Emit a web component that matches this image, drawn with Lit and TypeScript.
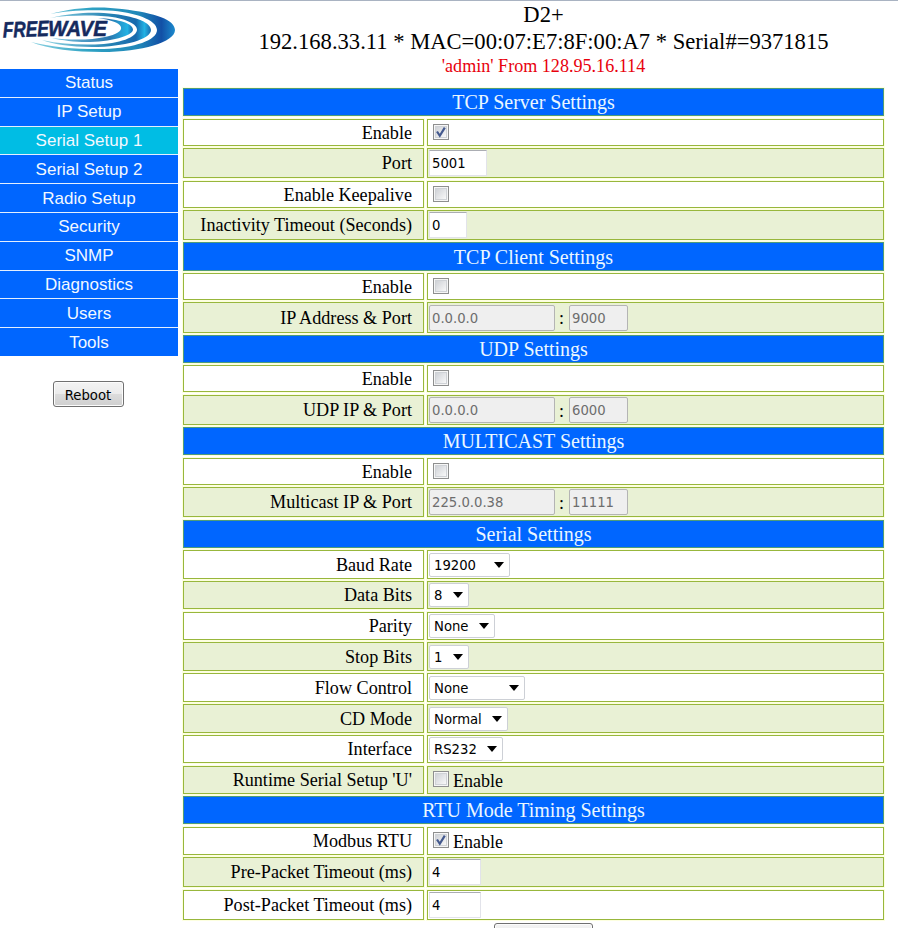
import { LitElement, html, css, nothing } from "lit";
import { customElement } from "lit/decorators.js";

type Field =
  | { kind: "check"; on?: boolean; text?: string }
  | { kind: "text"; value: string; w: number }
  | { kind: "pair"; ip: string; port: string }
  | { kind: "select"; value: string; w: number };

// h is the row's height, gap the space under it
interface Row { h: number; gap: number; title?: string; label?: string; alt?: boolean; field?: Field }

const ROWS: Row[] = [
  { h: 28, gap: 3, title: "TCP Server Settings" },
  { h: 27, gap: 2, label: "Enable", field: { kind: "check", on: true } },
  { h: 30, gap: 3, label: "Port", alt: true, field: { kind: "text", value: "5001", w: 58 } },
  { h: 27, gap: 2, label: "Enable Keepalive", field: { kind: "check" } },
  { h: 30, gap: 2, label: "Inactivity Timeout (Seconds)", alt: true, field: { kind: "text", value: "0", w: 38 } },
  { h: 29, gap: 2, title: "TCP Client Settings" },
  { h: 27, gap: 2, label: "Enable", field: { kind: "check" } },
  { h: 31, gap: 2, label: "IP Address & Port", alt: true, field: { kind: "pair", ip: "0.0.0.0", port: "9000" } },
  { h: 28, gap: 2, title: "UDP Settings" },
  { h: 27, gap: 3, label: "Enable", field: { kind: "check" } },
  { h: 30, gap: 2, label: "UDP IP & Port", alt: true, field: { kind: "pair", ip: "0.0.0.0", port: "6000" } },
  { h: 28, gap: 3, title: "MULTICAST Settings" },
  { h: 27, gap: 2, label: "Enable", field: { kind: "check" } },
  { h: 30, gap: 3, label: "Multicast IP & Port", alt: true, field: { kind: "pair", ip: "225.0.0.38", port: "11111" } },
  { h: 28, gap: 2, title: "Serial Settings" },
  { h: 29, gap: 2, label: "Baud Rate", field: { kind: "select", value: "19200", w: 81 } },
  { h: 28, gap: 3, label: "Data Bits", alt: true, field: { kind: "select", value: "8", w: 40 } },
  { h: 28, gap: 2, label: "Parity", field: { kind: "select", value: "None", w: 66 } },
  { h: 29, gap: 2, label: "Stop Bits", alt: true, field: { kind: "select", value: "1", w: 40 } },
  { h: 29, gap: 2, label: "Flow Control", field: { kind: "select", value: "None", w: 96 } },
  { h: 29, gap: 2, label: "CD Mode", alt: true, field: { kind: "select", value: "Normal", w: 79 } },
  { h: 28, gap: 3, label: "Interface", field: { kind: "select", value: "RS232", w: 74 } },
  { h: 28, gap: 2, label: "Runtime Serial Setup 'U'", alt: true, field: { kind: "check", text: "Enable" } },
  { h: 28, gap: 3, title: "RTU Mode Timing Settings" },
  { h: 28, gap: 2, label: "Modbus RTU", field: { kind: "check", on: true, text: "Enable" } },
  { h: 30, gap: 3, label: "Pre-Packet Timeout (ms)", alt: true, field: { kind: "text", value: "4", w: 52 } },
  { h: 30, gap: 3, label: "Post-Packet Timeout (ms)", field: { kind: "text", value: "4", w: 52 } },
];

const MENU = ["Status", "IP Setup", "Serial Setup 1", "Serial Setup 2", "Radio Setup", "Security", "SNMP", "Diagnostics", "Users", "Tools"];

@customElement("app-root")
export class AppRoot extends LitElement {
  static styles = css`
    :host { display: block; box-sizing: border-box; height: 928px; overflow: hidden; background: #fff;
      border-top: 1px solid #a9b3c2; color: #000; font-family: "Liberation Serif", serif; }
    * { box-sizing: border-box; }
    .page { display: flex; align-items: flex-start; }
    .side { width: 178px; margin-right: 5px; display: flex; flex-direction: column; align-items: center; }
    .logo { display: block; width: 178px; height: 55px; margin-bottom: 13px; }
    .mark { font: italic bold 22px "Liberation Sans", sans-serif; fill: #152a5e; stroke: #152a5e; stroke-width: .5px; }
    .menu { width: 178px; height: 287px; display: grid; grid-template-rows: repeat(10, minmax(0, 1fr)); row-gap: 1px; background: #e4efff; }
    .item { background: #06f; color: #f2f8ff; font: 17px/26px "Liberation Sans", sans-serif; display: flex; align-items: center; justify-content: center; padding-top: 1px; }
    .item.on { background: #00bde4; }
    .button, .input, .select { font-family: "DejaVu Sans Condensed", "DejaVu Sans", sans-serif; font-stretch: condensed; font-size: 14.7px; line-height: 22px; }
    .button { border: 1px solid #707070; border-radius: 3px; box-shadow: inset 0 0 0 1px #fcfcfc;
      background: linear-gradient(#f3f3f3, #ebebeb 50%, #dcdcdc 51%, #cfcfcf); line-height: 25px; text-align: center; }
    .reboot { width: 71px; height: 26px; margin: 25px 2px 0 0; }
    .submit { width: 99px; height: 26px; margin-left: 311px; }
    .main { width: 701px; }
    .head { height: 87px; text-align: center; padding: 0 0 0 20px; font-size: 22.6px; line-height: 27px; }
    .user { font-size: 18.1px; line-height: 22px; color: #e8000c; }
    .row { display: grid; grid-template-columns: 241px 457px; column-gap: 3px; }
    .cell { border: 1px solid #98b73c; display: flex; align-items: center; min-width: 0; box-shadow: 0 0 0 1px #fdffe0; }
    .alt { background: #e9f1d5; }
    .title { grid-column: 1 / 3; background: #06f; border-color: #4f9c78; color: #eaf7ff; font-size: 20px; justify-content: center; padding-top: 1px; }
    .label { justify-content: flex-end; padding: 1.5px 11px 0 0; font-size: 18.15px; white-space: nowrap; }
    .value { padding-left: 1px; font-size: 18px; }
    .box { display: block; width: 16px; height: 16px; margin: 0 4px 1px; }
    .box.tight { margin-bottom: 2px; }
    .caption { padding-top: 2px; }
    .input, .select { background: #fff; border: 1px solid #e2e3ea; border-top-color: #abadb3; }
    .input { height: 26px; padding: 1px 2px; white-space: nowrap; }
    .disabled { background: #efefef; border-color: #b4b4b4; border-radius: 2px; color: #6d6d6d; }
    .ip { width: 126px; }
    .port { width: 59px; }
    .colon { width: 14px; padding: 2px 0 0 4px; }
    .select { height: 24px; padding: 0 5px 0 4px; display: flex; align-items: center; justify-content: space-between; border-color: #cdd0d6; border-radius: 2px; }
    .arrow { width: 10px; height: 6px; flex: none; }
  `;

  private field(f: Field) {
    switch (f.kind) {
      case "check":
        return html`<svg class="box ${f.text ? "tight" : ""}" viewBox="0 0 16 16">
            <defs><linearGradient id="g" x1="0" y1="0" x2="1" y2="1"><stop offset="0" stop-color="#cdd0d5" /><stop offset="1" stop-color="#fafafa" /></linearGradient></defs>
            <rect x=".5" y=".5" width="15" height="15" fill="#f6f6f6" stroke="#8e8f8f" />
            <rect x="2.5" y="2.5" width="11" height="11" fill="url(#g)" stroke="#cfd2d6" />
            ${f.on ? html`<svg viewBox="0 0 16 16"><path d="M4 7.5 6.8 11.8 11.8 3.6" fill="none" stroke="#44598e" stroke-width="2.2" /></svg>` : nothing}
          </svg>${f.text ? html`<span class="caption">${f.text}</span>` : nothing}`;
      case "text":
        return html`<div class="input" style="width:${f.w}px">${f.value}</div>`;
      case "pair":
        return html`<div class="input disabled ip">${f.ip}</div><span class="colon">:</span><div class="input disabled port">${f.port}</div>`;
      case "select":
        return html`<div class="select" style="width:${f.w}px">${f.value}<svg class="arrow" viewBox="0 0 10 6"><path d="M0 0h10L5 6z" /></svg></div>`;
    }
  }

  render() {
    return html`<div class="page">
      <div class="side">
        <svg class="logo" viewBox="0 1 178 55">
          <defs>
            <linearGradient id="w" gradientUnits="userSpaceOnUse" x1="30" y1="0" x2="176" y2="0"><stop offset="0" stop-color="#8fd3e2" /><stop offset=".4" stop-color="#2fa3c4" /><stop offset=".75" stop-color="#1f86b8" /><stop offset=".9" stop-color="#1250a6" /><stop offset="1" stop-color="#1c8fd0" /></linearGradient>
            <linearGradient id="m" gradientUnits="userSpaceOnUse" x1="45" y1="0" x2="152" y2="0"><stop offset="0" stop-color="#8fd3e2" /><stop offset=".6" stop-color="#2683b4" /><stop offset=".85" stop-color="#1768ac" /><stop offset=".93" stop-color="#22b2e4" /><stop offset="1" stop-color="#1a5fa4" /></linearGradient>
            <linearGradient id="n" gradientUnits="userSpaceOnUse" x1="52" y1="0" x2="134" y2="0"><stop offset="0" stop-color="#7cc6e0" /><stop offset=".7" stop-color="#2a77ae" /><stop offset=".92" stop-color="#22b2e4" /><stop offset="1" stop-color="#1a5fa4" /></linearGradient>
          </defs>
          <path fill="url(#w)" d="M50 14C75 7 100 6 122 9C156 13 175 20 175 30C175 42 142 52 102 52C75 52 48 49 31 42C55 48 80 49.5 104 49C135 48 157 40 157 30C157 20 135 12 108 10.5C85 9.5 65 11 50 14Z" />
          <path fill="url(#m)" d="M50 18C75 12 96 12 114 14C138 17 151 23 151 30C151 39 125 47 92 47C70 47 52 44 42 40C60 44 78 45 95 44.5C120 44 137 37 137 29.5C137 23 122 17 101 16C84 15 66 15.5 50 18Z" />
          <path fill="url(#n)" d="M98 18C120 19 133 24 133 29.5C133 36 110 42 86 42C75 42 62 40.5 52 38C72 40.5 92 40 105 37C117 34.5 122 31 121 27C119 22 110 20 98 18Z" />
          <text class="mark" x="3" y="37.5" textLength="46" lengthAdjust="spacingAndGlyphs" transform="rotate(-2 3 37)">FREE</text>
          <text class="mark" x="48" y="36" textLength="59" lengthAdjust="spacingAndGlyphs">WAVE</text>
        </svg>
        <div class="menu">${MENU.map((m, i) => html`<div class="item ${i === 2 ? "on" : ""}">${m}</div>`)}</div>
        <div class="button reboot">Reboot</div>
      </div>
      <div class="main">
        <div class="head">
          <div>D2+</div>
          <div>192.168.33.11 * MAC=00:07:E7:8F:00:A7 * Serial#=9371815</div>
          <div class="user">'admin' From 128.95.16.114</div>
        </div>
        ${ROWS.map((r) => html`<div class="row" style="height:${r.h}px;margin-bottom:${r.gap}px">
          ${r.title
            ? html`<div class="cell title">${r.title}</div>`
            : html`<div class="cell label ${r.alt ? "alt" : ""}">${r.label}</div><div class="cell value ${r.alt ? "alt" : ""}">${this.field(r.field!)}</div>`}
        </div>`)}
        <div class="button submit"></div>
      </div>
    </div>`;
  }
}
